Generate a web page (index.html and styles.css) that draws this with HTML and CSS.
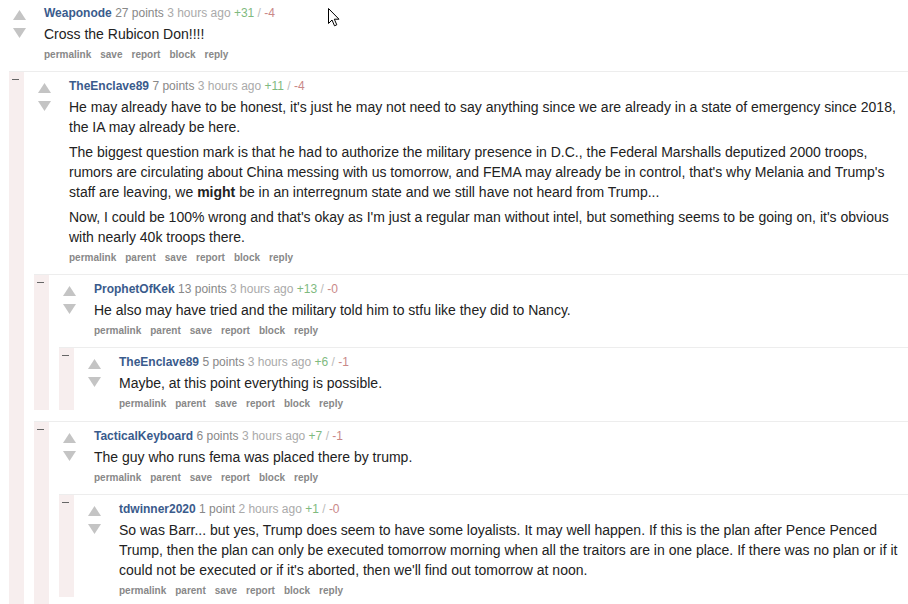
FILE: index.html
```html
<!DOCTYPE html>
<html>
<head>
<meta charset="utf-8">
<title>Comments</title>
<link rel="stylesheet" href="styles.css">
</head>
<body>
<div class="thread">
  <div class="comment top">
    <div class="bar"></div>
    <div class="main">
      <div class="row">
        <div class="votes">
          <svg viewBox="0 0 13 10"><polygon points="6.5,0 13,10 0,10"/></svg>
          <svg viewBox="0 0 13 10"><polygon points="0,0 13,0 6.5,10"/></svg>
        </div>
        <div class="entry">
          <p class="tagline"><span class="author">Weaponode</span> <span class="score">27 points</span> <span class="time">3 hours ago</span> <span class="up">+31</span> <span class="sep">/</span> <span class="down">-4</span></p>
          <div class="md"><p>Cross the Rubicon Don!!!!</p></div>
          <ul class="buttons"><li>permalink</li><li>save</li><li>report</li><li>block</li><li>reply</li></ul>
        </div>
      </div>
      <div class="children">

        <div class="comment nested">
          <div class="bar"><span class="dash"></span></div>
          <div class="main">
            <div class="row">
              <div class="votes">
                <svg viewBox="0 0 13 10"><polygon points="6.5,0 13,10 0,10"/></svg>
                <svg viewBox="0 0 13 10"><polygon points="0,0 13,0 6.5,10"/></svg>
              </div>
              <div class="entry">
                <p class="tagline"><span class="author">TheEnclave89</span> <span class="score">7 points</span> <span class="time">3 hours ago</span> <span class="up">+11</span> <span class="sep">/</span> <span class="down">-4</span></p>
                <div class="md">
                  <p>He may already have to be honest, it's just he may not need to say anything since we are already in a state of emergency since 2018, the IA may already be here.</p>
                  <p>The biggest question mark is that he had to authorize the military presence in D.C., the Federal Marshalls deputized 2000 troops, rumors are circulating about China messing with us tomorrow, and FEMA may already be in control, that's why Melania and Trump's staff are leaving, we <strong>might</strong> be in an interregnum state and we still have not heard from Trump...</p>
                  <p>Now, I could be 100% wrong and that's okay as I'm just a regular man without intel, but something seems to be going on, it's obvious with nearly 40k troops there.</p>
                </div>
                <ul class="buttons"><li>permalink</li><li>parent</li><li>save</li><li>report</li><li>block</li><li>reply</li></ul>
              </div>
            </div>
            <div class="children more">

              <div class="comment nested">
                <div class="bar"><span class="dash"></span></div>
                <div class="main">
                  <div class="row">
                    <div class="votes">
                      <svg viewBox="0 0 13 10"><polygon points="6.5,0 13,10 0,10"/></svg>
                      <svg viewBox="0 0 13 10"><polygon points="0,0 13,0 6.5,10"/></svg>
                    </div>
                    <div class="entry">
                      <p class="tagline"><span class="author">ProphetOfKek</span> <span class="score">13 points</span> <span class="time">3 hours ago</span> <span class="up">+13</span> <span class="sep">/</span> <span class="down">-0</span></p>
                      <div class="md"><p>He also may have tried and the military told him to stfu like they did to Nancy.</p></div>
                      <ul class="buttons"><li>permalink</li><li>parent</li><li>save</li><li>report</li><li>block</li><li>reply</li></ul>
                    </div>
                  </div>
                  <div class="children">
                    <div class="comment nested">
                      <div class="bar"><span class="dash"></span></div>
                      <div class="main">
                        <div class="row">
                          <div class="votes">
                            <svg viewBox="0 0 13 10"><polygon points="6.5,0 13,10 0,10"/></svg>
                            <svg viewBox="0 0 13 10"><polygon points="0,0 13,0 6.5,10"/></svg>
                          </div>
                          <div class="entry">
                            <p class="tagline"><span class="author">TheEnclave89</span> <span class="score">5 points</span> <span class="time">3 hours ago</span> <span class="up">+6</span> <span class="sep">/</span> <span class="down">-1</span></p>
                            <div class="md"><p>Maybe, at this point everything is possible.</p></div>
                            <ul class="buttons"><li>permalink</li><li>parent</li><li>save</li><li>report</li><li>block</li><li>reply</li></ul>
                          </div>
                        </div>
                      </div>
                    </div>
                  </div>
                </div>
              </div>

              <div class="comment nested">
                <div class="bar"><span class="dash"></span></div>
                <div class="main">
                  <div class="row">
                    <div class="votes">
                      <svg viewBox="0 0 13 10"><polygon points="6.5,0 13,10 0,10"/></svg>
                      <svg viewBox="0 0 13 10"><polygon points="0,0 13,0 6.5,10"/></svg>
                    </div>
                    <div class="entry">
                      <p class="tagline"><span class="author">TacticalKeyboard</span> <span class="score">6 points</span> <span class="time">3 hours ago</span> <span class="up">+7</span> <span class="sep">/</span> <span class="down">-1</span></p>
                      <div class="md"><p>The guy who runs fema was placed there by trump.</p></div>
                      <ul class="buttons"><li>permalink</li><li>parent</li><li>save</li><li>report</li><li>block</li><li>reply</li></ul>
                    </div>
                  </div>
                  <div class="children more">
                    <div class="comment nested">
                      <div class="bar"><span class="dash"></span></div>
                      <div class="main">
                        <div class="row">
                          <div class="votes">
                            <svg viewBox="0 0 13 10"><polygon points="6.5,0 13,10 0,10"/></svg>
                            <svg viewBox="0 0 13 10"><polygon points="0,0 13,0 6.5,10"/></svg>
                          </div>
                          <div class="entry">
                            <p class="tagline"><span class="author">tdwinner2020</span> <span class="score">1 point</span> <span class="time">2 hours ago</span> <span class="up">+1</span> <span class="sep">/</span> <span class="down">-0</span></p>
                            <div class="md"><p>So was Barr... but yes, Trump does seem to have some loyalists. It may well happen. If this is the plan after Pence Penced Trump, then the plan can only be executed tomorrow morning when all the traitors are in one place. If there was no plan or if it could not be executed or if it's aborted, then we'll find out tomorrow at noon.</p></div>
                            <ul class="buttons"><li>permalink</li><li>parent</li><li>save</li><li>report</li><li>block</li><li>reply</li></ul>
                          </div>
                        </div>
                      </div>
                    </div>
                  </div>
                </div>
              </div>

            </div>
          </div>
        </div>

      </div>
    </div>
  </div>
</div>
<svg class="cursor" viewBox="0 0 13 19" width="13" height="19"><polygon points="0.5,0.5 0.5,15.5 4,12 6.5,17.8 8.8,16.8 6.3,11.2 11,11.2" fill="#fff" stroke="#000" stroke-width="1" stroke-linejoin="miter"/></svg>
</body>
</html>
```
FILE: styles.css
```css
* { box-sizing: border-box; }
html, body { margin: 0; padding: 0; background: #fff; }
body {
  font-family: "Liberation Sans", Arial, sans-serif;
  color: #222;
  overflow: hidden;
  position: relative;
  height: 604px;
}
.thread { margin-left: -16px; }
.comment { display: flex; }
.comment.nested { border-top: 1px solid #ededed; margin-top: 10px; }
.comment.nested + .comment.nested { margin-top: 11px; }
.bar { width: 15px; flex: none; background: #f7eeee; }
.dash { display: block; width: 7px; height: 1px; background: #666; margin: 7px 0 0 3px; }
.main { flex: 1; min-width: 0; }
.row { display: flex; }
.votes {
  width: 13px; flex: none; margin-left: 14px; padding-top: 11px;
  display: flex; flex-direction: column; gap: 8px;
}
.top > .main > .row > .votes { padding-top: 10px; }
.votes svg { display: block; width: 13px; height: 10px; fill: #c4c4c4; }
.entry { flex: 1; min-width: 0; margin-left: 18px; padding-top: 6px; }
.top > .main > .row > .entry { padding-top: 5px; }
.tagline { margin: 0; font-size: 12px; line-height: 16px; color: #888; }
.author { color: #3a5b8c; font-weight: bold; }
.time { color: #aaa; }
.up { color: #7fba7f; }
.sep { color: #bbb; }
.down { color: #c98888; }
.md { margin-top: 3px; font-size: 14px; line-height: 20px; color: #222; }
.md p { margin: 0 0 5px; }
.buttons {
  list-style: none; margin: 0; padding: 0; display: flex; gap: 9px;
  font-size: 10px; line-height: 12px; font-weight: bold; color: #888;
}
.children { margin-left: 10px; }
.children.more { padding-bottom: 24px; }
.cursor { position: absolute; left: 328px; top: 8px; }
```
